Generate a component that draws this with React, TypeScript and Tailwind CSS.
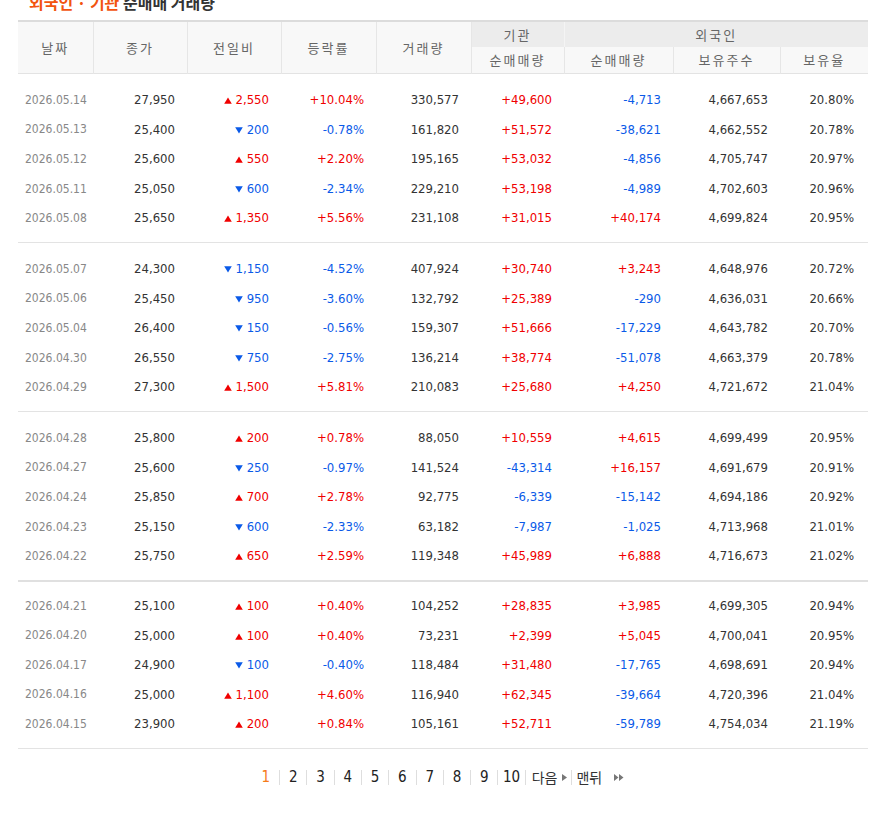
type Row = [string, string, "up" | "down", string, string, string, string, string, string, string];

const GROUPS: Row[][] = [
  [
    ["2026.05.14", "27,950", "up", "2,550", "+10.04%", "330,577", "+49,600", "-4,713", "4,667,653", "20.80%"],
    ["2026.05.13", "25,400", "down", "200", "-0.78%", "161,820", "+51,572", "-38,621", "4,662,552", "20.78%"],
    ["2026.05.12", "25,600", "up", "550", "+2.20%", "195,165", "+53,032", "-4,856", "4,705,747", "20.97%"],
    ["2026.05.11", "25,050", "down", "600", "-2.34%", "229,210", "+53,198", "-4,989", "4,702,603", "20.96%"],
    ["2026.05.08", "25,650", "up", "1,350", "+5.56%", "231,108", "+31,015", "+40,174", "4,699,824", "20.95%"],
  ],
  [
    ["2026.05.07", "24,300", "down", "1,150", "-4.52%", "407,924", "+30,740", "+3,243", "4,648,976", "20.72%"],
    ["2026.05.06", "25,450", "down", "950", "-3.60%", "132,792", "+25,389", "-290", "4,636,031", "20.66%"],
    ["2026.05.04", "26,400", "down", "150", "-0.56%", "159,307", "+51,666", "-17,229", "4,643,782", "20.70%"],
    ["2026.04.30", "26,550", "down", "750", "-2.75%", "136,214", "+38,774", "-51,078", "4,663,379", "20.78%"],
    ["2026.04.29", "27,300", "up", "1,500", "+5.81%", "210,083", "+25,680", "+4,250", "4,721,672", "21.04%"],
  ],
  [
    ["2026.04.28", "25,800", "up", "200", "+0.78%", "88,050", "+10,559", "+4,615", "4,699,499", "20.95%"],
    ["2026.04.27", "25,600", "down", "250", "-0.97%", "141,524", "-43,314", "+16,157", "4,691,679", "20.91%"],
    ["2026.04.24", "25,850", "up", "700", "+2.78%", "92,775", "-6,339", "-15,142", "4,694,186", "20.92%"],
    ["2026.04.23", "25,150", "down", "600", "-2.33%", "63,182", "-7,987", "-1,025", "4,713,968", "21.01%"],
    ["2026.04.22", "25,750", "up", "650", "+2.59%", "119,348", "+45,989", "+6,888", "4,716,673", "21.02%"],
  ],
  [
    ["2026.04.21", "25,100", "up", "100", "+0.40%", "104,252", "+28,835", "+3,985", "4,699,305", "20.94%"],
    ["2026.04.20", "25,000", "up", "100", "+0.40%", "73,231", "+2,399", "+5,045", "4,700,041", "20.95%"],
    ["2026.04.17", "24,900", "down", "100", "-0.40%", "118,484", "+31,480", "-17,765", "4,698,691", "20.94%"],
    ["2026.04.16", "25,000", "up", "1,100", "+4.60%", "116,940", "+62,345", "-39,664", "4,720,396", "21.04%"],
    ["2026.04.15", "23,900", "up", "200", "+0.84%", "105,161", "+52,711", "-59,789", "4,754,034", "21.19%"],
  ],
];

// 그룹별 위/아래 여백 (collapse된 테두리 보정 포함)
const GROUP_PAD: [number, number][] = [
  [12, 10],
  [11, 10],
  [11, 10],
  [10, 10],
];

const FONT = {
  fontFamily: '"DejaVu Sans Condensed", Tahoma, "Liberation Sans", "Noto Sans CJK KR", sans-serif',
};
const KFONT = { fontFamily: '"Noto Sans CJK KR", "Liberation Sans", sans-serif' };

// 부호에 따라 색 지정
function signColor(v: string) {
  if (v.startsWith("+")) return "text-[#f00000]";
  if (v.startsWith("-")) return "text-[#0a5ae8]";
  return "text-[#333]";
}

function Arrow({ dir }: { dir: "up" | "down" }) {
  return (
    <svg width="8" height="7" viewBox="0 0 8 7" className="mr-[4px] inline-block align-[0px]">
      {dir === "up" ? (
        <path d="M4 0.5 L7.8 6.8 L0.2 6.8 Z" fill="#f00000" />
      ) : (
        <path d="M0.2 0.2 L7.8 0.2 L4 6.5 Z" fill="#0a5ae8" />
      )}
    </svg>
  );
}

function DataRow({ r }: { r: Row }) {
  const cell = "h-[29.6px] pr-[12px] text-right text-[13px] whitespace-nowrap";
  return (
    <tr>
      <td className="h-[29.6px] pl-[7px] text-left text-[12px] text-[#888]">{r[0]}</td>
      <td className={`${cell} text-[#333]`}>{r[1]}</td>
      <td className={`${cell} ${r[2] === "up" ? "text-[#f00000]" : "text-[#0a5ae8]"}`}>
        <Arrow dir={r[2]} />
        {r[3]}
      </td>
      <td className={`${cell} ${signColor(r[4])}`}>{r[4]}</td>
      <td className={`${cell} text-[#333]`}>{r[5]}</td>
      <td className={`${cell} ${signColor(r[6])}`}>{r[6]}</td>
      <td className={`${cell} pr-[11px] ${signColor(r[7])}`}>{r[7]}</td>
      <td className={`${cell} text-[#333]`}>{r[8]}</td>
      <td className={`${cell} pr-[14px] text-[#333]`}>{r[9]}</td>
    </tr>
  );
}

function Spacer({ h, line }: { h: number; line?: string }) {
  return (
    <tr>
      <td colSpan={9} className={line} style={{ height: h }} />
    </tr>
  );
}

const PAGES = ["1", "2", "3", "4", "5", "6", "7", "8", "9", "10"];

export default function App() {
  const th = "border-l border-[#e6e6e6] bg-[#f8f8f8] text-center text-[13px] font-normal tracking-[2px] text-[#666]";
  return (
    <div className="min-h-[834px] w-full bg-white pb-10" style={FONT}>
      <div className="-mt-[8px] h-[28px] pl-[29px] text-[16px] font-bold leading-[20px] text-[#333]" style={KFONT}>
        <span className="text-[#f25410]">외국인 · 기관</span> 순매매 거래량
      </div>

      <div className="px-[18px]">
        <table className="w-[850px] table-fixed border-collapse">
          <colgroup>
            <col className="w-[75px]" />
            <col className="w-[94px]" />
            <col className="w-[94px]" />
            <col className="w-[95px]" />
            <col className="w-[95px]" />
            <col className="w-[93px]" />
            <col className="w-[109px]" />
            <col className="w-[107px]" />
            <col className="w-[88px]" />
          </colgroup>
          <thead style={KFONT}>
            <tr className="border-t-2 border-[#dcdcdc]">
              <th rowSpan={2} className={`${th} border-l-0`}>날짜</th>
              <th rowSpan={2} className={th}>종가</th>
              <th rowSpan={2} className={th}>전일비</th>
              <th rowSpan={2} className={th}>등락률</th>
              <th rowSpan={2} className={th}>거래량</th>
              <th className="h-[26px] border-l border-[#e6e6e6] bg-[#ececec] text-center text-[13px] font-normal tracking-[2px] text-[#666]">
                기관
              </th>
              <th colSpan={3} className="h-[26px] border-l border-[#f4f4f4] bg-[#ececec] text-center text-[13px] font-normal tracking-[2px] text-[#666]">
                외국인
              </th>
            </tr>
            <tr className="border-b border-[#e3e3e3]">
              <th className={`${th} h-[26px]`}>순매매량</th>
              <th className={th}>순매매량</th>
              <th className={th}>보유주수</th>
              <th className={th}>보유율</th>
            </tr>
          </thead>
          <tbody>
            {GROUPS.map((g, gi) => (
              <GroupRows key={gi} rows={g} gi={gi} />
            ))}
          </tbody>
        </table>
      </div>

      {/* 페이지 네비게이션 */}
      <div className="mt-[17px] flex items-center justify-center pr-[9px] text-[15px] text-[#222]">
        {PAGES.map((p, i) => (
          <div key={p} className="flex items-center">
            {i > 0 && <span className="h-[15px] w-px bg-[#dedede]" />}
            <span className={`w-[26.3px] text-center ${p === "1" ? "text-[#f57a1a]" : ""}`}>{p}</span>
          </div>
        ))}
        <span className="h-[15px] w-px bg-[#dedede]" />
        <span className="flex items-center pl-[6px] pr-[4px] text-[14px] text-[#333]" style={KFONT}>
          다음
          <svg width="5" height="7" viewBox="0 0 5 7" className="ml-[5px]">
            <path d="M0 0 L5 3.5 L0 7 Z" fill="#777" />
          </svg>
        </span>
        <span className="h-[15px] w-px bg-[#dedede]" />
        <span className="flex items-center pl-[4px] text-[14px] text-[#333]" style={KFONT}>
          맨뒤
          <svg width="10" height="7" viewBox="0 0 10 7" className="ml-[12px]">
            <path d="M0 0 L4.5 3.5 L0 7 Z M5 0 L9.5 3.5 L5 7 Z" fill="#777" />
          </svg>
        </span>
      </div>
    </div>
  );
}

function GroupRows({ rows, gi }: { rows: Row[]; gi: number }) {
  const bottom =
    gi === 2 ? "border-b-2 border-[#e0e0e0]" : "border-b border-[#e3e3e3]";
  const [top, bot] = GROUP_PAD[gi];
  return (
    <>
      <Spacer h={top} />
      {rows.map((r) => (
        <DataRow key={r[0]} r={r} />
      ))}
      <Spacer h={bot} line={bottom} />
    </>
  );
}
